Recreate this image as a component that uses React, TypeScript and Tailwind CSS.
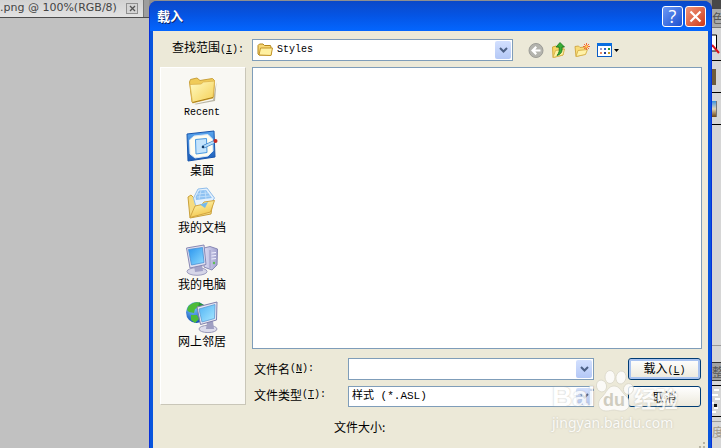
import React, { useState } from 'react';

type IconProps = { className?: string };

const RecentIcon: React.FC<IconProps> = ({ className }) => (
  <svg viewBox="0 0 32 32" className={className} aria-hidden="true">
    <defs>
      <linearGradient id="recentFront" x1="0" y1="0" x2="1" y2="1">
        <stop offset="0" stopColor="#fffbc4" />
        <stop offset="1" stopColor="#f5cf52" />
      </linearGradient>
    </defs>
    <path d="M8 31 L27 27 L30.500 9 L29 28 L10 31.500Z" fill="#b9b5a4" />
    <path d="M3.500 9 L4.500 6.500 L11 5 L14 7.500 L26.500 5.500 L28.500 7.500 L27.500 24 L6 29Z" fill="#f0cb58" stroke="#c9a03a" />
    <path d="M4 11.500 L15 11 L17.500 9 L28.500 8 L27 25 L6.500 30Z" fill="url(#recentFront)" stroke="#dcb34c" strokeWidth="0.800" />
    <path d="M6.500 29.500 L27 24.500" stroke="#a87c14" />
  </svg>
);

const DesktopIcon: React.FC<IconProps> = ({ className }) => (
  <svg viewBox="0 0 32 32" className={className} aria-hidden="true">
    <defs>
      <linearGradient id="deskFrame" x1="0" y1="0" x2="0" y2="1">
        <stop offset="0" stopColor="#5aa6ee" />
        <stop offset="1" stopColor="#1b5cb8" />
      </linearGradient>
    </defs>
    <path d="M1 4 L28 1 L29 27 L2 31Z" fill="url(#deskFrame)" stroke="#1a57ad" />
    <path d="M8 6 L22 4.500 L26.500 9 L27 21 L22 26 L9 28 L4 24 L3.500 10Z" fill="#fffdf0" stroke="#d8e8f8" />
    <path d="M9.500 9.500 L20.500 8.500 L21 22.500 L10 24Z" fill="#c4e4fc" stroke="#4b9be3" />
    <path d="M17 17 L28 12" stroke="#2f78c0" strokeWidth="3.500" />
    <path d="M17 17 L28 12" stroke="#b4dcfa" strokeWidth="2" />
    <circle cx="17" cy="17" r="1.300" fill="#123a66" />
    <circle cx="29.500" cy="11" r="2" fill="#c42b22" />
  </svg>
);

const DocumentsIcon: React.FC<IconProps> = ({ className }) => (
  <svg viewBox="0 0 32 32" className={className} aria-hidden="true">
    <defs>
      <linearGradient id="docsFront" x1="0" y1="0" x2="0.400" y2="1">
        <stop offset="0" stopColor="#fffab8" />
        <stop offset="1" stopColor="#f3c850" />
      </linearGradient>
    </defs>
    <path d="M2 10 L5 8 L8 11 L27 13 L25 27 L4 31Z" fill="#f6dc80" stroke="#c9a03a" />
    <path d="M12 2 L21 1 L28.500 11 L22 21 L10 20 L7.500 11Z" fill="#e4f1fd" stroke="#8fbdea" />
    <path d="M13 3.500 L20 3 L26 11 L10 13 L9.500 10Z" fill="#8fc2f2" />
    <path d="M11 7 L22 6 M11 10 L24 9 M15 3.500 L13 12 M19 3.500 L20 12" stroke="#c8e2fa" strokeWidth="0.800" />
    <path d="M4 30.500 L9 19 L16 17.500 L18 15 L28.500 13.500 L24.500 25Z" fill="url(#docsFront)" stroke="#d2a540" />
    <path d="M14 17.500 L22 15 L19 21Z" fill="#74b9ed" />
  </svg>
);

const ComputerIcon: React.FC<IconProps> = ({ className }) => (
  <svg viewBox="0 0 32 32" className={className} aria-hidden="true">
    <defs>
      <linearGradient id="pcScreen" x1="0" y1="0" x2="1" y2="1">
        <stop offset="0" stopColor="#2a94ee" />
        <stop offset="1" stopColor="#8edcff" />
      </linearGradient>
      <linearGradient id="pcCase" x1="0" y1="0" x2="1" y2="0">
        <stop offset="0" stopColor="#dcdcf2" />
        <stop offset="1" stopColor="#a4a4d0" />
      </linearGradient>
    </defs>
    <path d="M18 4 L24 2.500 L31.500 5 L31 21 L26 26 L18 23Z" fill="url(#pcCase)" stroke="#8888b4" />
    <path d="M24 6 V24" stroke="#8e8ebc" strokeWidth="0.800" />
    <path d="M25.500 9 L30 8.500 M25.500 12 L30 11.500 M25.500 15 L30 14.500" stroke="#f2f2ff" />
    <circle cx="28" cy="19" r="1.200" fill="#5ebf54" />
    <ellipse cx="11" cy="27.500" rx="10" ry="3.800" fill="#d6d6e8" stroke="#9c9cbe" />
    <path d="M8 21 L16 20 L17 27 L9 28Z" fill="#a3a3c8" />
    <path d="M0.500 4 L18 1 L20 20.500 L4 24Z" fill="#e0e0f0" stroke="#8888b4" />
    <path d="M2.500 5.500 L16.500 3.500 L18 18.500 L5.500 21Z" fill="url(#pcScreen)" stroke="#4a90d4" strokeWidth="0.800" />
  </svg>
);

const NetworkIcon: React.FC<IconProps> = ({ className }) => (
  <svg viewBox="0 0 32 32" className={className} aria-hidden="true">
    <defs>
      <radialGradient id="globe" cx="0.350" cy="0.300" r="0.750">
        <stop offset="0" stopColor="#7cc8ff" />
        <stop offset="1" stopColor="#0b48b4" />
      </radialGradient>
      <linearGradient id="netScreen" x1="0" y1="0" x2="1" y2="1">
        <stop offset="0" stopColor="#4fb2f4" />
        <stop offset="1" stopColor="#a9e8ff" />
      </linearGradient>
    </defs>
    <circle cx="10.500" cy="11.500" r="10.500" fill="url(#globe)" />
    <path d="M2.500 5 Q8 0 14 1.500 L13 6 L9 8 L8 12 L3 11 L1 9Z M5 14 L11 14 L13 18 L9 22 L5 19Z" fill="#4dbb3a" />
    <path d="M13 1.500 L18 4 L17 8 L12 7Z" fill="#2b9834" />
    <ellipse cx="22" cy="28" rx="9" ry="3.600" fill="#dcdcec" stroke="#9898b8" />
    <path d="M21 21 L27 20 L28 28 L20 28Z" fill="#9f9fc2" />
    <path d="M11 6 L31 1 L30.500 19 L14.500 23.500Z" fill="#e6e6f2" stroke="#8080ac" />
    <path d="M13 8 L29 3.500 L28.500 17.500 L16 21Z" fill="url(#netScreen)" stroke="#5c9cd4" strokeWidth="0.800" />
  </svg>
);

const FolderIcon: React.FC<IconProps> = ({ className }) => (
  <svg viewBox="0 0 16 16" className={className} aria-hidden="true">
    <path d="M1 3.500 L2.500 2 L6 2 L7.500 3.500 L13.500 3.500 L14 5 L14 13 L2 13 L1 12Z" fill="#f7d774" stroke="#b3861c" />
    <path d="M2 13 L3.500 6 L15.500 6 L14 13.500Z" fill="#fff0a0" stroke="#c3952a" />
  </svg>
);

const BackIcon: React.FC<IconProps> = ({ className }) => (
  <svg viewBox="0 0 16 16" className={className} aria-hidden="true">
    <circle cx="8" cy="8.500" r="7" fill="#b4b4ae" stroke="#9c9c96" />
    <path d="M3 8.500 L7.500 4 L9 5.500 L7.300 7.400 H12.500 V9.600 H7.300 L9 11.500 L7.500 13Z" fill="#fff" />
  </svg>
);

const UpIcon: React.FC<IconProps> = ({ className }) => (
  <svg viewBox="0 0 16 16" className={className} aria-hidden="true">
    <path d="M1.500 5 L5 4 L6.500 5.500 L12 5 L12 13 L2 15.500Z" fill="#f7d664" stroke="#d2aa40" />
    <path d="M2 15.500 L4.500 8.500 L13.500 7 L12 13Z" fill="#fff2a2" stroke="#d8b450" />
    <path d="M9 0.500 L13.500 5 H11 C11.500 9.500 10.500 12 6 13.500 C8.500 10.500 8.500 8 8 5 H5Z" fill="#3aae35" stroke="#14731a" strokeWidth="0.800" />
  </svg>
);

const NewFolderIcon: React.FC<IconProps> = ({ className }) => (
  <svg viewBox="0 0 16 16" className={className} aria-hidden="true">
    <path d="M1 4.500 L4.500 4 L6 5.500 L11.500 5 L11.500 12 L2 14.500Z" fill="#f9dc78" stroke="#d2aa48" />
    <path d="M2 14.500 L4 8.500 L13.500 7.500 L11.500 12.500Z" fill="#fff2a8" stroke="#d8b450" />
    <path d="M12.500 1 V8 M9 4.500 H16 M10 2 L15 7 M15 2 L10 7" stroke="#f4683a" />
    <circle cx="12.500" cy="4.500" r="1.300" fill="#ffd65a" />
  </svg>
);

const ViewMenuIcon: React.FC<IconProps> = ({ className }) => (
  <svg viewBox="0 0 22 16" className={className} aria-hidden="true">
    <rect x="0.500" y="1.500" width="14" height="13" fill="#fff" stroke="#0a5cc4" />
    <path d="M0 1 H15 V4 H0Z" fill="#0a6ee0" />
    <path d="M3 6 h2 v2 h-2Z" fill="#9a9ac8" />
    <path d="M7 6 h2 v2 h-2Z" fill="#3266c8" />
    <path d="M11 6 h2 v2 h-2Z" fill="#279638" />
    <path d="M3 10 h2 v2 h-2Z" fill="#e88a6a" />
    <path d="M7 10 h2 v2 h-2Z" fill="#1f3c94" />
    <path d="M11 10 h2 v2 h-2Z" fill="#c89a1e" />
    <path d="M17 7 h5 l-2.500 3Z" fill="#000" />
  </svg>
);

const Chevron: React.FC = () => (
  <span className="flex h-full w-full items-center justify-center rounded-xs bg-linear-to-b from-[#d3e0fe] to-[#b4c8f6]">
    <svg viewBox="0 0 9 7" className="h-[7px] w-[9px]" aria-hidden="true">
      <path d="M1 1 L4.500 4.500 L8 1" fill="none" stroke="#4d6185" strokeWidth="2" />
    </svg>
  </span>
);

const places = [
  { label: 'Recent', latin: true, Icon: RecentIcon },
  { label: '桌面', latin: false, Icon: DesktopIcon },
  { label: '我的文档', latin: false, Icon: DocumentsIcon },
  { label: '我的电脑', latin: false, Icon: ComputerIcon },
  { label: '网上邻居', latin: false, Icon: NetworkIcon },
];

const Hotkey: React.FC<{ letter: string; colon?: boolean }> = ({ letter, colon }) => (
  <span className="font-['Liberation_Mono',monospace] text-[10px]">
    (<u>{letter}</u>){colon && ':'}
  </span>
);

const DocumentWindow: React.FC = () => (
  <div className="w-[149px] shrink-0 overflow-hidden bg-[#c1c1c1]">
    <div className="flex h-[18px] border-b border-[#4c4c4c] bg-[#9d9d9d]">
      <div className="flex w-36 items-center justify-between border-r border-[#777] bg-linear-to-b from-[#d2d2d2] to-[#e2e2e2] pr-[5px]">
        <span className="font-['DejaVu_Sans',sans-serif] text-[11px] whitespace-nowrap text-[#444]">.png @ 100%(RGB/8)</span>
        <button
          type="button"
          aria-label="Close tab"
          className="flex h-[11px] w-3 items-center justify-center border border-[#909090] bg-[#d4d4d4]"
        >
          <svg viewBox="0 0 7 7" className="h-[7px] w-[7px]" aria-hidden="true">
            <path d="M1 1 L6 6 M6 1 L1 6" stroke="#555" strokeWidth="1.300" />
          </svg>
        </button>
      </div>
    </div>
  </div>
);

const PanelStrip: React.FC = () => (
  <div className="w-[9px] shrink-0 overflow-hidden bg-[#d6d6d6] text-[#555]">
    <div className="h-[9px] bg-[#484848]" />
    <div className="flex h-[19px] items-center border-b border-[#777] bg-[#a9a9a9] text-xs">色</div>
    <div className="flex h-[33px] items-center border-b border-black">
      <svg viewBox="0 0 9 20" className="h-5 w-[9px]" aria-hidden="true">
        <path d="M0 1 H4.500 V17 H0" fill="#fff" stroke="#000" />
        <path d="M0 11 L7 19" stroke="#d8101c" strokeWidth="2" />
      </svg>
    </div>
    <div className="flex h-8 items-center border-b border-black">
      <div className="h-4 w-1 bg-[#6e5c3c]" />
    </div>
    <div className="flex h-8 items-center border-b border-black">
      <div className="h-4 w-[5px] border-r border-[#777] bg-linear-to-b from-[#2b8fe0] via-[#e3d6b4] via-50% to-[#6b4310]" />
    </div>
    <div className="h-[221px] border-b border-[#999]" />
    <div className="h-4" />
    <div className="flex h-[19px] items-center border-y border-[#333] bg-[#a2a2a2] text-xs">整</div>
    <div className="h-[5px] border-b border-black" />
    <div className="flex h-[31px] items-center border-b border-black">
      <svg viewBox="0 0 9 26" className="h-[26px] w-[9px]" aria-hidden="true">
        <path d="M2 2 H7 M0 7 H6 M3 11 H8 M0 15 H2 M2 20 H6 M0 24 H4" stroke="#fff" strokeWidth="2" />
        <path d="M2 16 h3 v3 h-3Z" fill="#111" />
      </svg>
    </div>
    <div className="h-[5px] border-b border-[#999]" />
    <div className="flex h-5 items-center text-xs whitespace-nowrap text-[#a09888]">度:</div>
  </div>
);

const Watermark: React.FC = () => (
  <div className="pointer-events-none absolute top-[369px] right-[42px] w-[127px] text-white opacity-80">
    <div className="flex h-11 items-end">
      <span className="w-11 shrink-0 font-['Liberation_Sans',sans-serif] text-[28px] leading-8 font-bold text-shadow-[0_0_2px_#b5b3a8]">
        Bai
      </span>
      <svg viewBox="0 0 38 44" className="h-11 w-[38px] shrink-0" aria-hidden="true">
        <g fill="#fff" stroke="#d6d3c6" strokeWidth="0.800">
          <ellipse cx="5.500" cy="17" rx="5" ry="6" transform="rotate(-15 5.500 17)" />
          <ellipse cx="14" cy="8" rx="5" ry="6.500" />
          <ellipse cx="25" cy="8.500" rx="5" ry="6.500" transform="rotate(12 25 8.500)" />
          <ellipse cx="32.500" cy="20" rx="5" ry="5.500" transform="rotate(20 32.500 20)" />
          <path d="M18 17 C24 17 25 23 30 27 C36 32 34 42 26 42 C21 42 20 41 18 41 C15 41 14 42 10 42 C2 42 0 33 6 28 C11 23 12 17 18 17Z" />
        </g>
        <text x="18" y="37" textAnchor="middle" fontFamily="Liberation Sans, sans-serif" fontSize="18" fontWeight="700" fill="#c9c6b9">
          du
        </text>
      </svg>
      <span className="text-[22px] leading-8 font-bold whitespace-nowrap text-shadow-[0_0_2px_#b5b3a8]">经验</span>
    </div>
    <p className="font-['Noto_Sans',sans-serif] text-[14px] leading-5 whitespace-nowrap text-shadow-[0_0_2px_#b5b3a8]">
      jingyan.baidu.com
    </p>
  </div>
);

const LoadDialog: React.FC = () => {
  const [folder, setFolder] = useState('Styles');
  const [fileName, setFileName] = useState('');
  const [fileType, setFileType] = useState('asl');

  return (
    <section
      role="dialog"
      aria-labelledby="dialogTitle"
      className="mt-px flex min-w-0 flex-1 flex-col overflow-hidden rounded-t-lg border-x border-[#0831d9] bg-[#0855dd]"
    >
      <header className="flex h-[30px] shrink-0 items-center gap-[2px] bg-linear-to-b from-[#0a48c8] via-[#0555e5] to-[#0366ff] pr-[5px] pl-[7px]">
        <h1 id="dialogTitle" className="flex-1 text-[13px] font-bold text-white text-shadow-[1px_1px_0_#0a246a]">载入</h1>
        <button
          type="button"
          aria-label="Help"
          className="flex h-[21px] w-[21px] items-center justify-center rounded-[3px] border border-white bg-linear-to-br from-[#6d98f5] to-[#1c4fd0] font-['Open_Sans',sans-serif] text-lg leading-4 text-white"
        >
          ?
        </button>
        <button
          type="button"
          aria-label="Close"
          className="flex h-[21px] w-[21px] items-center justify-center rounded-[3px] border border-white bg-linear-to-br from-[#f09478] to-[#cc3510]"
        >
          <svg viewBox="0 0 13 13" className="h-[13px] w-[13px]" aria-hidden="true">
            <path d="M1.500 1.500 L11.500 11.500 M11.500 1.500 L1.500 11.500" stroke="#fff" strokeWidth="2.200" />
          </svg>
        </button>
      </header>

      <div className="mx-[3px] flex flex-1 flex-col gap-[6px] bg-[#ece9d8] pt-2 pr-[6px] pl-[7px]">
        <div className="flex h-[22px] items-center">
          <label htmlFor="lookIn" className="w-[92px] pb-1 pl-3 whitespace-nowrap">
            查找范围<Hotkey letter="I" colon />
          </label>
          <div className="relative h-full w-[261px]">
            <select
              id="lookIn"
              value={folder}
              onChange={e => setFolder(e.target.value)}
              className="h-full w-full appearance-none border border-[#7f9db9] bg-white pl-6 font-['Liberation_Mono',monospace] text-[10px]"
            >
              <option>Styles</option>
            </select>
            <FolderIcon className="pointer-events-none absolute top-[3px] left-[5px] h-4 w-4" />
            <span className="pointer-events-none absolute top-[2px] right-[2px] bottom-[2px] w-4">
              <Chevron />
            </span>
          </div>
          <div className="ml-[15px] flex items-center gap-[7px]">
            <button type="button" aria-label="Back"><BackIcon className="h-4 w-4" /></button>
            <button type="button" aria-label="Up one level"><UpIcon className="h-4 w-4" /></button>
            <button type="button" aria-label="New folder"><NewFolderIcon className="h-4 w-4" /></button>
            <button type="button" aria-label="View menu"><ViewMenuIcon className="h-4 w-[22px]" /></button>
          </div>
        </div>

        <div className="flex items-start gap-[6px]">
          <nav className="flex h-[338px] w-[86px] shrink-0 flex-col gap-[9px] border border-t-white border-r-[#c9c6b8] border-b-[#c9c6b8] border-l-white bg-[#f9f8f3] pt-[5px] pr-[2px]">
            {places.map(({ label, latin, Icon }) => (
              <button key={label} type="button" className="flex flex-col items-center">
                <Icon className="h-8 w-8" />
                <span className={latin ? "font-['Liberation_Mono',monospace] text-[10px] leading-4" : 'leading-4'}>
                  {label}
                </span>
              </button>
            ))}
          </nav>

          <div className="flex min-w-0 flex-1 flex-col">
            <div role="listbox" aria-label="Files" className="h-[282px] border border-[#7f9db9] bg-white" />

            <div className="mt-[9px] flex h-[22px] pr-px">
              <label htmlFor="fileName" className="flex w-24 items-center pl-[2px]">
                文件名<Hotkey letter="N" colon />
              </label>
              <div className="flex flex-1 border border-[#7f9db9] bg-white p-px">
                <input
                  id="fileName"
                  type="text"
                  value={fileName}
                  onChange={e => setFileName(e.target.value)}
                  className="min-w-0 flex-1 px-[2px] outline-none"
                />
                <button type="button" aria-label="Recent names" className="w-4">
                  <Chevron />
                </button>
              </div>
              <button
                type="submit"
                className="ml-[34px] w-[73px] rounded-[3px] border border-[#003c74] bg-linear-to-b from-white to-[#ece9dc] leading-4 shadow-[inset_0_0_0_2px_#a9c3f0]"
              >
                载入<Hotkey letter="L" />
              </button>
            </div>

            <div className="mt-[6px] flex h-[21px] pr-px">
              <label htmlFor="fileType" className="flex w-24 items-center pb-1 pl-[2px]">
                文件类型<Hotkey letter="T" colon />
              </label>
              <div className="relative flex-1">
                <select
                  id="fileType"
                  value={fileType}
                  onChange={e => setFileType(e.target.value)}
                  className="h-full w-full appearance-none border border-[#7f9db9] bg-white pl-[3px] font-['Liberation_Mono','Noto_Sans_CJK_SC',monospace] text-[11px]"
                >
                  <option value="asl">样式 (*.ASL)</option>
                </select>
                <span className="pointer-events-none absolute top-[2px] right-[2px] bottom-[2px] w-4">
                  <Chevron />
                </span>
              </div>
              <button
                type="button"
                className="ml-[34px] w-[73px] rounded-[3px] border border-[#003c74] bg-linear-to-b from-white to-[#ece9dc] leading-4"
              >
                取消
              </button>
            </div>

            <p className="mt-3 pl-[82px] leading-4">文件大小:</p>
          </div>
        </div>

        <svg viewBox="0 0 12 12" className="mt-auto -mr-1 h-3 w-3 self-end" aria-hidden="true">
          <path d="M9 1h2v2h-2Z M5 5h2v2h-2Z M9 5h2v2h-2Z M1 9h2v2h-2Z M5 9h2v2h-2Z M9 9h2v2h-2Z" fill="#b8b4a2" />
        </svg>
      </div>
    </section>
  );
};

const App: React.FC = () => (
  <main className="relative flex min-h-screen overflow-hidden bg-[#8f8f8f] font-['Noto_Sans_CJK_SC',sans-serif] text-xs text-black">
    <DocumentWindow />
    <LoadDialog />
    <PanelStrip />
    <Watermark />
  </main>
);

export default App;
